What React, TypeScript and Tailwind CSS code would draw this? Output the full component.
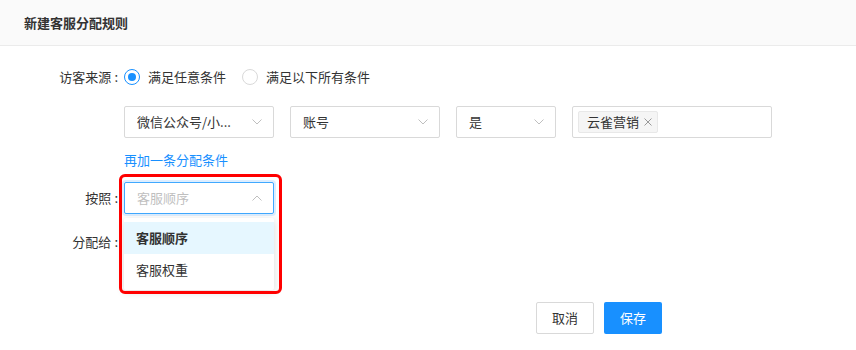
import React from "react";

const font = { fontFamily: '"Noto Sans CJK SC", "Noto Sans", sans-serif' };

function Chevron({ up }: { up?: boolean }) {
  return (
    <svg width="10" height="6" viewBox="0 0 10 6" className="shrink-0">
      <polyline
        points={up ? "0.5,5.5 5,1 9.5,5.5" : "0.5,0.5 5,5 9.5,0.5"}
        fill="none"
        stroke="#bfbfbf"
        strokeWidth="1"
      />
    </svg>
  );
}

function Select({ value, width }: { value: string; width: string }) {
  return (
    <div
      className={`flex h-[32px] ${width} items-center justify-between rounded-[2px] border border-[#d9d9d9] bg-white pl-[12px] pr-[11px] text-[13px] text-[#333]`}
    >
      <span className="truncate">{value}</span>
      <Chevron />
    </div>
  );
}

function Label({ text }: { text: string }) {
  return (
    <div className="w-[124px] shrink-0 pr-[6px] text-right text-[13px] text-[#333]">
      {text}
      <span className="ml-[3px]">:</span>
    </div>
  );
}

function Radio({ checked, label }: { checked?: boolean; label: string }) {
  return (
    <label className="flex items-center gap-[8px] text-[13px] text-[#333]">
      <span
        className={`flex h-[16px] w-[16px] items-center justify-center rounded-full border bg-white ${
          checked ? "border-[#1890ff]" : "border-[#d9d9d9]"
        }`}
      >
        {checked && <span className="h-[8px] w-[8px] rounded-full bg-[#1890ff]" />}
      </span>
      {label}
    </label>
  );
}

export default function App() {
  return (
    <div className="h-[350px] w-[856px] overflow-hidden bg-white" style={font}>
      {/* header */}
      <div className="flex h-[46px] items-center border-b border-[#ebebeb] bg-[#fafafa] px-[24px] text-[13px] font-semibold text-[#333]">
        新建客服分配规则
      </div>

      {/* source */}
      <div className="mt-[19px] flex h-[24px] items-center">
        <Label text="访客来源" />
        <div className="flex items-center gap-[16px]">
          <Radio checked label="满足任意条件" />
          <Radio label="满足以下所有条件" />
        </div>
      </div>

      {/* condition row */}
      <div className="mt-[17px] flex items-center gap-[16px] pl-[124px]">
        <Select value="微信公众号/小..." width="w-[150px]" />
        <Select value="账号" width="w-[150px]" />
        <Select value="是" width="w-[100px]" />
        <div className="flex h-[32px] w-[200px] items-center rounded-[2px] border border-[#d9d9d9] bg-white px-[5px]">
          <span className="flex h-[22px] items-center gap-[5px] rounded-[2px] border border-[#e8e8e8] bg-[#f5f5f5] pl-[8px] pr-[5px] text-[13px] text-[#333]">
            云雀营销
            <svg width="8" height="8" viewBox="0 0 8 8">
              <path d="M0.5 0.5 L7.5 7.5 M7.5 0.5 L0.5 7.5" stroke="#999" strokeWidth="1" />
            </svg>
          </span>
        </div>
      </div>

      <div className="mt-[12px] flex h-[20px] items-center pl-[124px] text-[13px] text-[#1890ff]">
        再加一条分配条件
      </div>

      {/* by */}
      <div className="mt-[12px] flex h-[32px] items-center">
        <Label text="按照" />
        <div className="relative">
          <div className="flex h-[32px] w-[150px] items-center justify-between rounded-[2px] border border-[#40a9ff] bg-white pl-[12px] pr-[11px] text-[13px] text-[#bfbfbf] shadow-[0_0_0_2px_rgba(24,144,255,0.15)]">
            <span>客服顺序</span>
            <Chevron up />
          </div>
          <div className="absolute left-0 top-[36px] z-10 w-[150px] rounded-[2px] bg-white py-[4px] shadow-[0_2px_8px_rgba(0,0,0,0.15)]">
            <div className="flex h-[32px] items-center bg-[#e6f7ff] px-[12px] text-[13px] font-semibold text-[#333]">
              客服顺序
            </div>
            <div className="flex h-[32px] items-center px-[12px] text-[13px] text-[#333]">
              客服权重
            </div>
          </div>
          <div className="pointer-events-none absolute left-[-5px] top-[-8px] z-20 h-[120px] w-[163px] rounded-[6px] border-[3px] border-[#ff0000]" />
        </div>
      </div>

      {/* assign to */}
      <div className="mt-[12px] flex h-[32px] items-center">
        <Label text="分配给" />
      </div>

      {/* actions */}
      <div className="mt-[44px] flex w-[662px] justify-end gap-[10px]">
        <button className="h-[32px] w-[58px] rounded-[2px] border border-[#d9d9d9] bg-white text-[13px] text-[#333]">
          取消
        </button>
        <button className="h-[32px] w-[58px] rounded-[2px] bg-[#1890ff] text-[13px] text-white">
          保存
        </button>
      </div>
    </div>
  );
}
